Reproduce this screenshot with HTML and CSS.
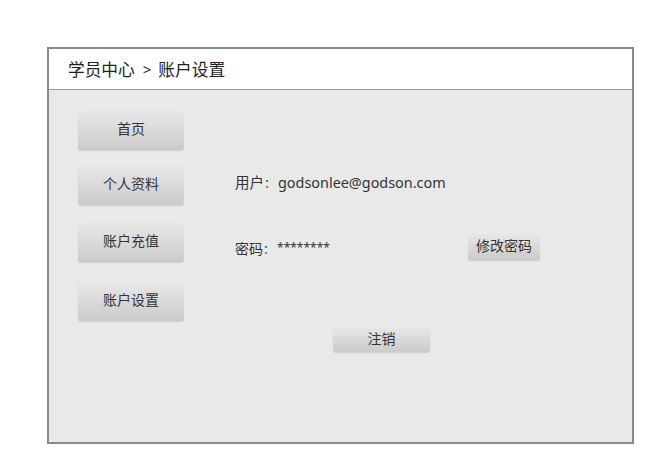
FILE: index.html
```html
<!DOCTYPE html>
<html lang="zh">
<head>
<meta charset="utf-8">
<title>账户设置</title>
<link rel="stylesheet" href="styles.css">
</head>
<body>
<div class="panel">
  <div class="panel-header">学员中心<span class="sep">&gt;</span>账户设置</div>
  <div class="panel-body">
    <nav class="side-nav">
      <button class="btn nav-btn">首页</button>
      <button class="btn nav-btn">个人资料</button>
      <button class="btn nav-btn">账户充值</button>
      <button class="btn nav-btn">账户设置</button>
    </nav>
    <main class="content">
      <div class="user-row">用户<span class="colon">：</span><span class="email">godsonlee@godson.com</span></div>
      <div class="pwd-row">
        <span class="pwd-label">密码<span class="colon">：</span><span class="stars">********</span></span>
        <button class="btn small-btn">修改密码</button>
      </div>
      <div class="logout-row">
        <button class="btn logout-btn">注销</button>
      </div>
    </main>
  </div>
</div>
</body>
</html>
```

FILE: styles.css
```css
* { box-sizing: border-box; }
body {
  margin: 0;
  background: #ffffff;
  font-family: "Noto Sans", "Noto Sans CJK SC", sans-serif;
  color: #333;
}
.panel {
  margin: 47px 0 0 47px;
  width: 587px;
  height: 397px;
  border: 2px solid #8a8a8a;
  display: flex;
  flex-direction: column;
  background: #e9e9e9;
}
.panel-header {
  height: 41px;
  background: #fff;
  border-bottom: 1px solid #999;
  padding-left: 19px;
  display: flex;
  align-items: center;
  font-size: 16.7px;
  color: #222;
  font-family: "Noto Sans CJK SC", sans-serif;
}
.sep {
  margin: 0 7px 0 8px;
  font-family: "Noto Sans", sans-serif;
  font-size: 15px;
}
.panel-body {
  flex: 1;
  display: flex;
}
.side-nav {
  display: flex;
  flex-direction: column;
  padding: 15px 0 0 29px;
}
.nav-btn + .nav-btn { margin-top: 12px; }
.nav-btn:nth-child(2) { margin-top: 10px; }
.nav-btn:nth-child(4) { margin-top: 14px; }
.btn {
  border: none;
  border-radius: 3px;
  background: linear-gradient(#ececec, #cbcbcb);
  box-shadow: 0 1px 1px rgba(0,0,0,0.12);
  color: #333;
  font-family: "Noto Sans CJK SC", sans-serif;
  padding: 0;
  cursor: pointer;
}
.nav-btn {
  width: 106px;
  height: 45px;
  font-size: 14px;
}
.content {
  display: flex;
  flex-direction: column;
  padding-left: 51px;
}
.user-row {
  margin-top: 82px;
  height: 20px;
  line-height: 20px;
  font-size: 14.5px;
  font-family: "Noto Sans CJK SC", sans-serif;
}
.email {
  font-family: "Noto Sans", sans-serif;
  font-size: 14.4px;
}
.colon {
  font-family: "Noto Sans CJK TC", sans-serif;
  font-size: 12px;
  margin-right: 2px;
}
.pwd-row {
  margin-top: 38px;
  width: 305px;
  height: 30px;
  display: flex;
  justify-content: space-between;
  align-items: center;
}
.pwd-label {
  font-size: 14px;
  padding-top: 5px;
  font-family: "Noto Sans CJK SC", sans-serif;
}
.stars {
  font-family: "Noto Sans", sans-serif;
  font-size: 12px;
  vertical-align: 2px;
}
.small-btn {
  width: 72px;
  height: 30px;
  font-size: 14px;
}
.logout-row {
  margin-top: 63px;
  padding-left: 98px;
}
.logout-btn {
  width: 97px;
  height: 29px;
  font-size: 14px;
}
```
